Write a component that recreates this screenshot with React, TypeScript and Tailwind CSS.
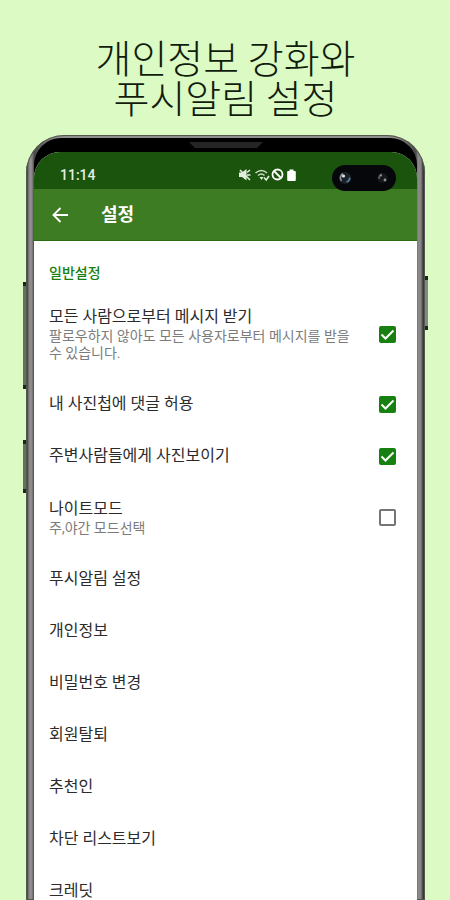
import { useState } from "react";
import clsx from "clsx";

interface Setting {
  id: string;
  title: string;
  description?: string;
  checked?: boolean;
}

const toggles: Setting[] = [
  {
    id: "messages",
    title: "모든 사람으로부터 메시지 받기",
    description: "팔로우하지 않아도 모든 사용자로부터 메시지를 받을 수 있습니다.",
    checked: true,
  },
  { id: "comments", title: "내 사진첩에 댓글 허용", checked: true },
  { id: "nearby", title: "주변사람들에게 사진보이기", checked: true },
  { id: "night", title: "나이트모드", description: "주,야간 모드선택", checked: false },
];

const links = ["푸시알림 설정", "개인정보", "비밀번호 변경", "회원탈퇴", "추천인", "차단 리스트보기", "크레딧"];

function StatusIcons() {
  return (
    <svg viewBox="0 0 60 14" className="h-[14px] w-[60px]" fill="none" aria-hidden="true">
      {/* muted speaker */}
      <path d="M1 4.500h3l4.500-3.500v11.500l-4.500-3.500H1z" fill="#e4eee0" />
      <path d="M2 2l10 10M9 4.500l3-2.500M9 7h3.500" stroke="#e4eee0" strokeWidth="1.600" />
      {/* wifi */}
      <path d="M17.500 5q6-5 11.500 0M20 7.500q3.500-3 6.500 0" stroke="#c9dcc2" strokeWidth="1.600" />
      <path d="M21.500 9h4l-2 3z" fill="#e4eee0" />
      <path d="M26 9.500l2.200 2.500L31 8" stroke="#e4eee0" strokeWidth="1.600" />
      {/* do not disturb */}
      <circle cx="39.500" cy="6.500" r="5" stroke="#fff" strokeWidth="1.800" />
      <path d="M36 3l7 7" stroke="#fff" strokeWidth="1.800" />
      {/* battery */}
      <path d="M51.500 1.500h4V3H57a.8.8 0 0 1 .8.8V12a1 1 0 0 1-1 1h-6.600a1 1 0 0 1-1-1V3.800A.8.800 0 0 1 50 3h1.500z" fill="#fff" />
    </svg>
  );
}

function Camera() {
  return (
    <svg viewBox="0 0 64 26" className="absolute top-[13px] right-[21px] h-[26px] w-[64px]" aria-hidden="true">
      <rect width="64" height="26" rx="13" fill="#05070b" />
      <circle cx="13" cy="13" r="6" fill="#1b2027" />
      <path d="M11 8.500a5 5 0 0 0-1.500 7.500" stroke="#8d9498" strokeWidth="1.600" fill="none" />
      <circle cx="11.500" cy="11" r="1.600" fill="#dfe6ea" />
      <path d="M14.500 17q3.500-1 3-4.500" stroke="#4c83a5" strokeWidth="1.800" fill="none" />
      <circle cx="50.500" cy="13" r="5" fill="#14181c" />
      <path d="M49.500 9q-2.500 1.500-2.500 5" stroke="#596064" strokeWidth="1.600" fill="none" />
      <circle cx="53" cy="15" r="1.400" fill="#8b9597" />
      <circle cx="49" cy="10.500" r="1" fill="#8b9597" />
    </svg>
  );
}

function Checkbox({ id, checked, onChange }: { id: string; checked: boolean; onChange: () => void }) {
  return (
    <span className="relative block size-[17px] shrink-0">
      <input
        id={id}
        type="checkbox"
        checked={checked}
        onChange={onChange}
        className="block size-full appearance-none rounded-[2px] border-2 border-[#757575] bg-white checked:border-[#178010] checked:bg-[#178010]"
      />
      {checked && (
        <svg viewBox="0 0 17 17" className="pointer-events-none absolute inset-0" fill="none" aria-hidden="true">
          <path d="M2.500 8.500l4 4 8-8" stroke="#fff" strokeWidth="2" />
        </svg>
      )}
    </span>
  );
}

function ToggleRow({ setting }: { setting: Setting }) {
  const [checked, setChecked] = useState(Boolean(setting.checked));

  return (
    <li className={clsx("flex min-h-[52px] items-center", setting.description && "py-4")}>
      <label htmlFor={setting.id} className="min-w-0 flex-1 pr-6">
        <span className="block text-[16px] leading-[22px] text-[#2b2b2b]">{setting.title}</span>
        {setting.description && (
          <span className="block text-[14px] leading-[17px] text-[#7c7c7c]">{setting.description}</span>
        )}
      </label>
      <Checkbox id={setting.id} checked={checked} onChange={() => setChecked((value) => !value)} />
    </li>
  );
}

export default function App() {
  return (
    <main className="flex h-screen flex-col overflow-hidden bg-[#dbfac4] pt-9 pr-[25px] pl-[26px] font-['Roboto','Noto_Sans_CJK_KR',sans-serif]">
      <h1 className="text-center font-['Noto_Sans_CJK_KR',sans-serif] text-[39px] leading-[40px] font-light text-[#111c0d]">
        개인정보 강화와
        <br />
        푸시알림 설정
      </h1>

      <div className="relative mt-[19px] flex min-h-0 flex-1 flex-col rounded-t-[38px] bg-[linear-gradient(90deg,#333_0,#333_1px,#666_2px,#969292_4px,#8a8686_6px,#4a4848_8px,#8e8e8e_30px,#8e8e8e_calc(100%-30px),#4a4848_calc(100%-9px),#8c8a8a_calc(100%-7px),#858383_calc(100%-4px),#3a3a3a_calc(100%-2px),#333_100%)] px-2 pt-[3px] shadow-[inset_0_0_0_1px_#55574f]">
        {/* side keys */}
        <i className="absolute top-[147px] -left-[3px] h-[107px] w-[3px] border-y-4 border-[#1d261d] bg-[#65705f]" />
        <i className="absolute top-[305px] -left-[3px] h-[53px] w-[3px] border-y-4 border-[#1d261d] bg-[#65705f]" />
        <i className="absolute top-[141px] -right-[3px] h-[54px] w-[3px] border-y-4 border-[#1d261d] bg-[#858585]" />

        <div className="flex min-h-0 flex-1 flex-col rounded-t-[27px] bg-black">
          <div className="flex h-[14px] shrink-0 justify-center pt-1">
            <svg viewBox="0 0 74 7" className="h-[7px] w-[74px]" aria-hidden="true">
              <path d="M0 0h74l-6 6H6z" fill="#252525" />
            </svg>
          </div>

          <div className="flex min-h-0 flex-1 flex-col overflow-hidden rounded-t-[26px] bg-white">
            <div className="relative flex h-[37px] shrink-0 items-center bg-[#1b540c] pt-2 pl-[26px]">
              <span className="w-[178px] text-[14px] leading-4 font-medium text-[#e6efe3]">11:14</span>
              <StatusIcons />
              <Camera />
            </div>

            <header className="flex h-[52px] shrink-0 items-center border-b border-[#2b6a14] bg-[#3e7c23] pl-[18px] text-white">
              <button type="button" aria-label="뒤로" className="mr-[33px]">
                <svg viewBox="0 0 16 16" className="size-4" fill="none" aria-hidden="true">
                  <path d="M16 8H2M8.500 1L1.500 8l7 7" stroke="currentColor" strokeWidth="1.900" />
                </svg>
              </button>
              <h2 className="text-[18px] leading-6 font-bold">설정</h2>
            </header>

            <section className="min-h-0 flex-1 overflow-y-auto pr-[21px] pl-[15px] [scrollbar-width:none]">
              <h3 className="pt-[22px] pb-[7px] text-[14px] leading-5 font-medium text-[#178010]">일반설정</h3>
              <ul>
                {toggles.map((setting) => (
                  <ToggleRow key={setting.id} setting={setting} />
                ))}
                {links.map((title) => (
                  <li key={title}>
                    <a href="#" className="flex h-[52px] items-center text-[16px] leading-[22px] text-[#2b2b2b]">
                      {title}
                    </a>
                  </li>
                ))}
              </ul>
            </section>
          </div>
        </div>
      </div>
    </main>
  );
}
